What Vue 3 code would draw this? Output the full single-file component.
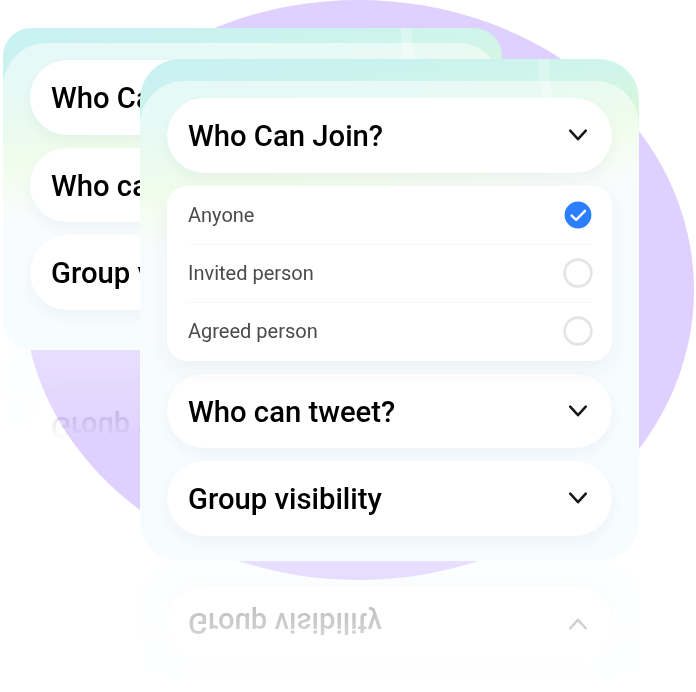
<script setup>
import { ref } from 'vue'

const backTitles = ['Who Can Join?', 'Who can tweet?', 'Group visibility']
const options = ['Anyone', 'Invited person', 'Agreed person']
const selected = ref('Anyone')
const frontSections = [
  { title: 'Who Can Join?', open: true },
  { title: 'Who can tweet?', open: false },
  { title: 'Group visibility', open: false },
]
</script>

<template>
  <main class="scene">
    <div class="disc"></div>

    <section class="card back">
      <div class="sheet">
        <div v-for="title in backTitles" :key="title" class="pill">
          <h2>{{ title }}</h2>
        </div>
      </div>
      <svg class="streak" viewBox="0 0 14 40" preserveAspectRatio="xMinYMin slice"><path d="M0 0H11C11 14 12 26 15 40H5C1 26 0 14 0 0Z" /></svg>
    </section>

    <section class="card front">
      <div class="sheet">
        <template v-for="s in frontSections" :key="s.title">
          <div class="pill">
            <h2>{{ s.title }}</h2>
            <svg class="chevron" viewBox="0 0 20 14"><path d="M2.2 2.6 10 11.2 17.8 2.6" /></svg>
          </div>
          <ul v-if="s.open" class="panel">
            <li v-for="o in options" :key="o" @click="selected = o">
              <span>{{ o }}</span>
              <svg v-if="o === selected" class="mark" viewBox="0 0 30 30">
                <circle cx="15" cy="15" r="13.4" fill="#2b7fff" />
                <path d="M8.6 15.6 13.2 19.8 22 10.8" class="tick" />
              </svg>
              <svg v-else class="mark" viewBox="0 0 30 30">
                <circle cx="15" cy="15" r="13.4" class="ring" />
              </svg>
            </li>
          </ul>
        </template>
      </div>
      <svg class="streak" viewBox="0 0 14 40"><path d="M0 0H11C11 14 12 26 15 40H5C1 26 0 14 0 0Z" /></svg>
    </section>
  </main>
</template>

<style>
body {
  margin: 0;
  background: #fff;
}
</style>

<style scoped>
.scene {
  position: relative;
  width: 696px;
  height: 692px;
  overflow: hidden;
  font-family: Roboto, "Liberation Sans", sans-serif;
}
.disc {
  position: absolute;
  left: 23px;
  top: 0;
  width: 671px;
  height: 580px;
  border-radius: 50%;
  background: #e0d0ff;
}
.card {
  position: absolute;
  box-sizing: border-box;
  width: 499px;
  overflow: hidden;
  background: linear-gradient(172deg, #c8f1f3 0, #caf3ef 40px, #d2f5e8 85px, #d6f7dc 112px, #e0fad6 134px, #e8fae2 155px, #eff8f6 180px, #f0f8ff 205px, #eef8ff 100%);
  -webkit-box-reflect: below 0 linear-gradient(transparent 72%, rgba(0, 0, 0, 0.36));
}
.back {
  left: 3px;
  top: 28px;
  height: 321.5px;
  padding-top: 15px;
  border-radius: 28px;
}
.front {
  left: 140px;
  top: 59px;
  height: 502px;
  padding-top: 22px;
  border-radius: 40px;
}
.sheet {
  box-sizing: border-box;
  display: flex;
  flex-direction: column;
  gap: 13px;
  height: 100%;
  padding: 17px 27px 0;
  border-radius: 44px 44px 0 0;
  background: rgba(255, 255, 255, 0.52);
}
.pill {
  box-sizing: border-box;
  flex: none;
  display: flex;
  align-items: center;
  justify-content: space-between;
  height: 74.5px;
  padding: 0 24px 0 21px;
  border-radius: 38px;
  background: #fff;
  box-shadow: 0 6px 14px rgba(30, 50, 60, 0.045);
}
h2 {
  margin: 0;
  padding-top: 1.6px;
  font-size: 29.25px;
  font-weight: 500;
  line-height: 34px;
  color: #000;
}
.chevron {
  width: 20px;
  height: 14px;
  fill: none;
  stroke: #17171a;
  stroke-width: 2.5;
  stroke-linecap: round;
  stroke-linejoin: round;
}
.panel {
  position: relative;
  box-sizing: border-box;
  flex: none;
  height: 175px;
  margin: 0;
  padding: 0 20px 0 21px;
  list-style: none;
  border-radius: 20px;
  background: #fff;
  box-shadow: 0 8px 22px rgba(30, 50, 60, 0.055);
}
li {
  box-sizing: border-box;
  display: flex;
  align-items: center;
  justify-content: space-between;
  height: 58.4px;
  font-size: 20px;
  line-height: 24px;
  color: #4b4b4b;
}
li + li {
  padding-bottom: 1px;
  border-top: 1px solid #f7f7f7;
}
.mark {
  width: 30px;
  height: 30px;
  margin-right: -1px;
}
.ring {
  fill: none;
  stroke: #e4e4e4;
  stroke-width: 2.6;
}
.tick {
  fill: none;
  stroke: #fff;
  stroke-width: 2.4;
  stroke-linecap: round;
  stroke-linejoin: round;
}
.streak {
  position: absolute;
  left: 398px;
  top: 0;
  width: 14px;
  height: 39px;
  fill: rgba(255, 255, 255, 0.28);
}
.back .streak {
  height: 32px;
}
</style>
